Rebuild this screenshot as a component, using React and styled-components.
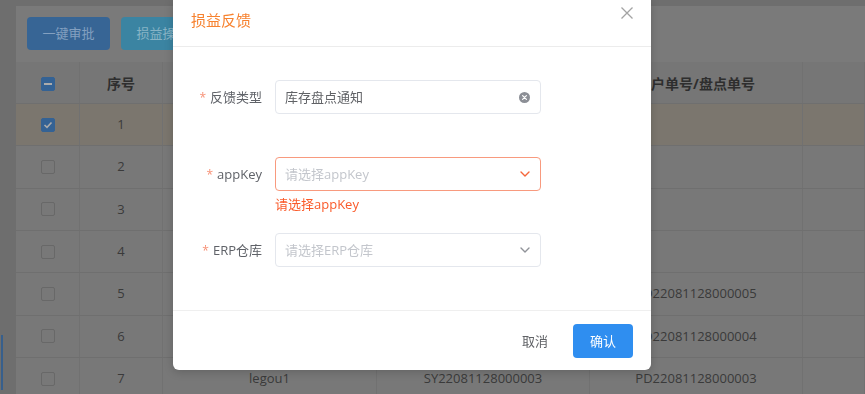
import React from "react";
import styled, { createGlobalStyle } from "styled-components";

const GlobalStyle = createGlobalStyle`
  html, body { margin: 0; padding: 0; }
  body {
    background: #6e6e6e;
    font-family: "Open Sans", "Noto Sans CJK SC", sans-serif;
    overflow: hidden;
  }
  * { box-sizing: border-box; }
`;

const Shell = styled.div`
  display: flex;
  height: 394px;
  width: 865px;
  overflow: hidden;
`;

const SideRail = styled.div`
  width: 16px;
  flex: none;
  display: flex;
  flex-direction: column;
  justify-content: flex-end;
  padding: 0 0 4px 1px;
`;

const RailMark = styled.div`
  width: 2px;
  height: 55px;
  background: #375f8c;
`;

const Main = styled.div`
  flex: 1;
  padding-top: 6px;
  display: flex;
  flex-direction: column;
  min-width: 0;
`;

const Card = styled.div`
  flex: 1;
  background: #7a7a7a;
  display: flex;
  flex-direction: column;
`;

const Toolbar = styled.div`
  height: 56px;
  padding: 11px 11px 0;
  display: flex;
  gap: 11px;
  align-items: flex-start;
`;

const ToolButton = styled.div`
  height: 33px;
  width: 83px;
  border-radius: 4px;
  background: ${(p) => p.$bg};
  color: ${(p) => p.$fg};
  font-size: 13px;
  line-height: 1.2;
  display: flex;
  align-items: center;
  justify-content: center;
`;

const Table = styled.div`
  display: grid;
  grid-template-columns: 64px 83px 214px 213px 213px 1fr;
`;

const HeadCell = styled.div`
  height: 41px;
  padding-top: 3px;
  display: flex;
  align-items: center;
  justify-content: center;
  background: #767676;
  color: #2e2e2e;
  font-weight: 700;
  font-size: 14px;
  line-height: 1.2;
  border-right: 1px solid #717171;
  white-space: nowrap;
`;

const Cell = styled.div`
  height: 42.33px;
  display: flex;
  align-items: center;
  justify-content: center;
  background: ${(p) => (p.$active ? "#7b766e" : "#787878")};
  border-top: 1px solid #6f6f6f;
  border-right: 1px solid #717171;
  color: #3a3a3a;
  font-size: 13px;
  line-height: 1.2;
  white-space: nowrap;
`;

const Check = styled.span`
  width: 14px;
  height: 14px;
  border-radius: 2px;
  border: 1px solid ${(p) => (p.$on ? "#346294" : "#686868")};
  background: ${(p) => (p.$on ? "#346294" : "transparent")};
  display: flex;
  align-items: center;
  justify-content: center;
`;

/* ---------- modal ---------- */

const Modal = styled.div`
  position: fixed;
  left: 173px;
  top: 0;
  width: 478px;
  background: #fff;
  border-radius: 0 0 6px 6px;
  box-shadow: 0 2px 10px rgba(0, 0, 0, 0.18);
  display: flex;
  flex-direction: column;
`;

const ModalHeader = styled.div`
  height: 47px;
  padding: 10px 18px 0 18px;
  border-bottom: 1px solid #ececec;
  display: flex;
  justify-content: space-between;
  align-items: flex-start;
`;

const Title = styled.div`
  color: #f7822f;
  font-size: 15px;
  line-height: 20px;
  font-family: "Noto Sans CJK SC", sans-serif;
`;

const CloseButton = styled.div`
  margin-top: -3px;
  width: 12px;
  height: 12px;
  display: flex;
`;

const ModalBody = styled.div`
  padding: 33px 20px 0 20px;
`;

const FormItem = styled.div`
  display: grid;
  grid-template-columns: 82px 266px;
  grid-template-rows: 34px 42.5px;
`;

const Label = styled.div`
  padding-right: 13px;
  display: flex;
  align-items: center;
  justify-content: flex-end;
  gap: 4px;
  color: #5f6268;
  font-size: 13px;
  line-height: 16px;
  white-space: nowrap;
`;

const Star = styled.span`
  color: #f79176;
  font-size: 12px;
  line-height: 12px;
  margin-top: 2px;
`;

const Field = styled.div`
  height: 34px;
  border: 1px solid ${(p) => (p.$error ? "#f89a7e" : "#e4e7ed")};
  border-radius: 4px;
  padding: 0 10px 0 9px;
  display: flex;
  align-items: center;
  justify-content: space-between;
  font-size: 13px;
  line-height: 16px;
  color: ${(p) => (p.$placeholder ? "#c3c6cc" : "#606266")};
`;

const ErrorSlot = styled.div`
  grid-column: 2;
  padding-top: 5px;
  color: #fa5a2a;
  font-size: 13px;
  line-height: 16px;
`;

const ModalFooter = styled.div`
  border-top: 1px solid #efefef;
  padding: 13px 18px 12px;
  display: flex;
  justify-content: flex-end;
  gap: 8px;
`;

const FooterButton = styled.div`
  width: 60px;
  height: 34px;
  border-radius: 4px;
  display: flex;
  align-items: center;
  justify-content: center;
  font-size: 13px;
  line-height: 16px;
  background: ${(p) => (p.$primary ? "#2f8ef0" : "transparent")};
  color: ${(p) => (p.$primary ? "#fff" : "#606266")};
`;

const ClearIcon = () => (
  <svg width="11" height="11" viewBox="0 0 11 11">
    <circle cx="5.5" cy="5.5" r="5.5" fill="#8c8f96" />
    <path d="M3.6 3.6 L7.4 7.4 M7.4 3.6 L3.6 7.4" stroke="#fff" strokeWidth="1.2" strokeLinecap="round" />
  </svg>
);

const Chevron = ({ color }) => (
  <svg width="10" height="6" viewBox="0 0 10 6">
    <path d="M1 1 L5 5 L9 1" fill="none" stroke={color} strokeWidth="1.4" strokeLinecap="round" strokeLinejoin="round" />
  </svg>
);

const CheckMark = () => (
  <svg width="10" height="8" viewBox="0 0 10 8">
    <path d="M1.5 4 L4 6.3 L8.5 1.5" fill="none" stroke="#ababab" strokeWidth="1.6" />
  </svg>
);

const Dash = () => (
  <svg width="8" height="2" viewBox="0 0 8 2">
    <rect width="8" height="2" fill="#ababab" />
  </svg>
);

/* rows 1–6: shop and loss numbers lie under the dialog and are not shown */
const rows = [
  { n: 1, shop: "", sy: "", pd: "" },
  { n: 2, shop: "", sy: "", pd: "" },
  { n: 3, shop: "", sy: "", pd: "" },
  { n: 4, shop: "", sy: "", pd: "" },
  { n: 5, shop: "", sy: "", pd: "PD22081128000005" },
  { n: 6, shop: "", sy: "", pd: "PD22081128000004" },
  { n: 7, shop: "legou1", sy: "SY22081128000003", pd: "PD22081128000003" },
];

export default function App() {
  return (
    <>
      <GlobalStyle />
      <Shell>
        <SideRail>
          <RailMark />
        </SideRail>
        <Main>
          <Card>
            <Toolbar>
              <ToolButton $bg="#376595" $fg="#83a0c0">一键审批</ToolButton>
              <ToolButton $bg="#3b84a2" $fg="#88b4c6">损益操作</ToolButton>
            </Toolbar>
            <Table>
              <HeadCell>
                <Check $on>
                  <Dash />
                </Check>
              </HeadCell>
              <HeadCell>序号</HeadCell>
              <HeadCell />
              <HeadCell />
              <HeadCell>客户单号/盘点单号</HeadCell>
              <HeadCell />
              {rows.map((r) => {
                const active = r.n === 1;
                return (
                  <React.Fragment key={r.n}>
                    <Cell $active={active}>
                      <Check $on={active}>{active && <CheckMark />}</Check>
                    </Cell>
                    <Cell $active={active}>{r.n}</Cell>
                    <Cell $active={active}>{r.shop}</Cell>
                    <Cell $active={active}>{r.sy}</Cell>
                    <Cell $active={active}>{r.pd}</Cell>
                    <Cell $active={active} />
                  </React.Fragment>
                );
              })}
            </Table>
          </Card>
        </Main>
      </Shell>

      <Modal>
        <ModalHeader>
          <Title>损益反馈</Title>
          <CloseButton>
            <svg width="12" height="12" viewBox="0 0 12 12">
              <path d="M0.5 0.5 L11.5 11.5 M11.5 0.5 L0.5 11.5" stroke="#a3a3a3" strokeWidth="1.3" />
            </svg>
          </CloseButton>
        </ModalHeader>
        <ModalBody>
          <FormItem>
            <Label>
              <Star>*</Star>反馈类型
            </Label>
            <Field>
              <span>库存盘点通知</span>
              <ClearIcon />
            </Field>
            <ErrorSlot />
          </FormItem>
          <FormItem>
            <Label>
              <Star>*</Star>appKey
            </Label>
            <Field $error $placeholder>
              <span>请选择appKey</span>
              <Chevron color="#f5663a" />
            </Field>
            <ErrorSlot>请选择appKey</ErrorSlot>
          </FormItem>
          <FormItem>
            <Label>
              <Star>*</Star>ERP仓库
            </Label>
            <Field $placeholder>
              <span>请选择ERP仓库</span>
              <Chevron color="#909399" />
            </Field>
            <ErrorSlot />
          </FormItem>
        </ModalBody>
        <ModalFooter>
          <FooterButton>取消</FooterButton>
          <FooterButton $primary>确认</FooterButton>
        </ModalFooter>
      </Modal>
    </>
  );
}
